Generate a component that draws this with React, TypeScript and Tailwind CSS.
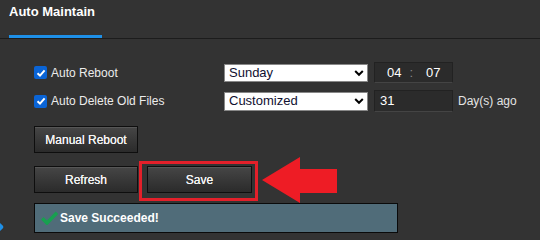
import React from "react";

function Check() {
  return (
    <span className="flex h-[13px] w-[13px] items-center justify-center rounded-[2px] bg-[#0a64d6]">
      <svg width="10" height="10" viewBox="0 0 10 10">
        <path d="M1.5 5.2 L4 7.6 L8.6 2.4" stroke="#fff" strokeWidth="2" fill="none" />
      </svg>
    </span>
  );
}

function Chevron() {
  return (
    <svg width="10" height="8" viewBox="0 0 10 8" className="mr-[3px]">
      <path d="M1.2 2 L5 5.8 L8.8 2" stroke="#000" strokeWidth="2" fill="none" />
    </svg>
  );
}

function Btn({ label, w }: { label: string; w: string }) {
  return (
    <div
      className={`${w} flex h-[27px] items-center justify-center border border-[#0e0e0e] bg-gradient-to-b from-[#464646] to-[#2b2b2b] text-[12px] text-[#f4f4f4] shadow-[inset_0_1px_0_#565656] [text-shadow:0_0_0.4px_#fff]`}
    >
      {label}
    </div>
  );
}

export default function App() {
  return (
    <div
      className="relative h-[240px] w-[540px] overflow-hidden bg-[#333333]"
      style={{ fontFamily: '"Liberation Sans", Arial, sans-serif' }}
    >
      <div className="border-b border-[#1c1c1c] px-[9px]">
        <div className="w-[93px] border-b-[3px] border-[#1e90e8] pt-[4px] pb-[15px] text-[13px] font-bold leading-[16px] text-white whitespace-nowrap">
          Auto Maintain
        </div>
      </div>

      <div className="flex flex-col pl-[34px] pt-[23px]">
        <div className="flex h-[21px] items-center">
          <div className="flex w-[190px] items-center gap-[4px]">
            <Check />
            <span className="text-[12px] text-[#ececec]">Auto Reboot</span>
          </div>
          <div className="flex h-[18px] w-[144px] items-center justify-between border border-[#888] bg-white pl-[4px] text-[13px] text-[#101030]">
            <span>Sunday</span>
            <Chevron />
          </div>
          <div className="ml-[6px] flex h-[21px] w-[79px] items-center border border-[#222] border-b-[#444] bg-[#2b2b2b] text-[13px] text-white">
            <span className="ml-[12px]">04</span>
            <span className="ml-[8px] text-[#888]">:</span>
            <span className="ml-[13px]">07</span>
          </div>
        </div>

        <div className="mt-[7px] flex h-[22px] items-center">
          <div className="flex w-[190px] items-center gap-[4px]">
            <Check />
            <span className="text-[12px] text-[#ececec]">Auto Delete Old Files</span>
          </div>
          <div className="flex h-[19px] w-[144px] items-center justify-between border border-[#888] bg-white pl-[4px] text-[13px] text-[#101030]">
            <span>Customized</span>
            <Chevron />
          </div>
          <div className="ml-[6px] flex h-[22px] w-[79px] items-center border border-[#222] border-b-[#444] bg-[#2b2b2b] text-[13px] text-white">
            <span className="ml-[5px]">31</span>
          </div>
          <span className="ml-[5px] text-[12px] text-[#e4e4e4]">Day(s) ago</span>
        </div>

        <div className="mt-[14px]">
          <Btn label="Manual Reboot" w="w-[104px]" />
        </div>

        <div className="mt-[13px] flex gap-[9px]">
          <Btn label="Refresh" w="w-[104px]" />
          <Btn label="Save" w="w-[105px]" />
        </div>

        <div className="mt-[10px] flex h-[30px] w-[364px] items-center gap-[2px] border border-[#0a0a0a] bg-[#506c79] pl-[6px]">
          <svg width="17" height="14" viewBox="0 0 17 14">
            <path d="M1.2 7.2 L6 12 L16 1.8" stroke="#18a050" strokeWidth="3.6" fill="none" />
          </svg>
          <span className="text-[12px] font-bold text-white">Save Succeeded!</span>
        </div>
      </div>

      {/* annotation: red highlight box */}
      <div className="absolute left-[139px] top-[161px] h-[40px] w-[119px] border-[3px] border-[#e3202a]" />

      {/* annotation: red arrow */}
      <svg className="absolute left-0 top-0" width="540" height="240">
        <polygon points="262,180 300,157 300,169 337,169 337,193 300,193 300,203" fill="#ee1c25" />
      </svg>

      {/* partial blue shape at left edge */}
      <div className="absolute left-[-8px] top-[222px] h-[10px] w-[10px] rotate-45 rounded-[2px] bg-[#1e90e8]" />
    </div>
  );
}
